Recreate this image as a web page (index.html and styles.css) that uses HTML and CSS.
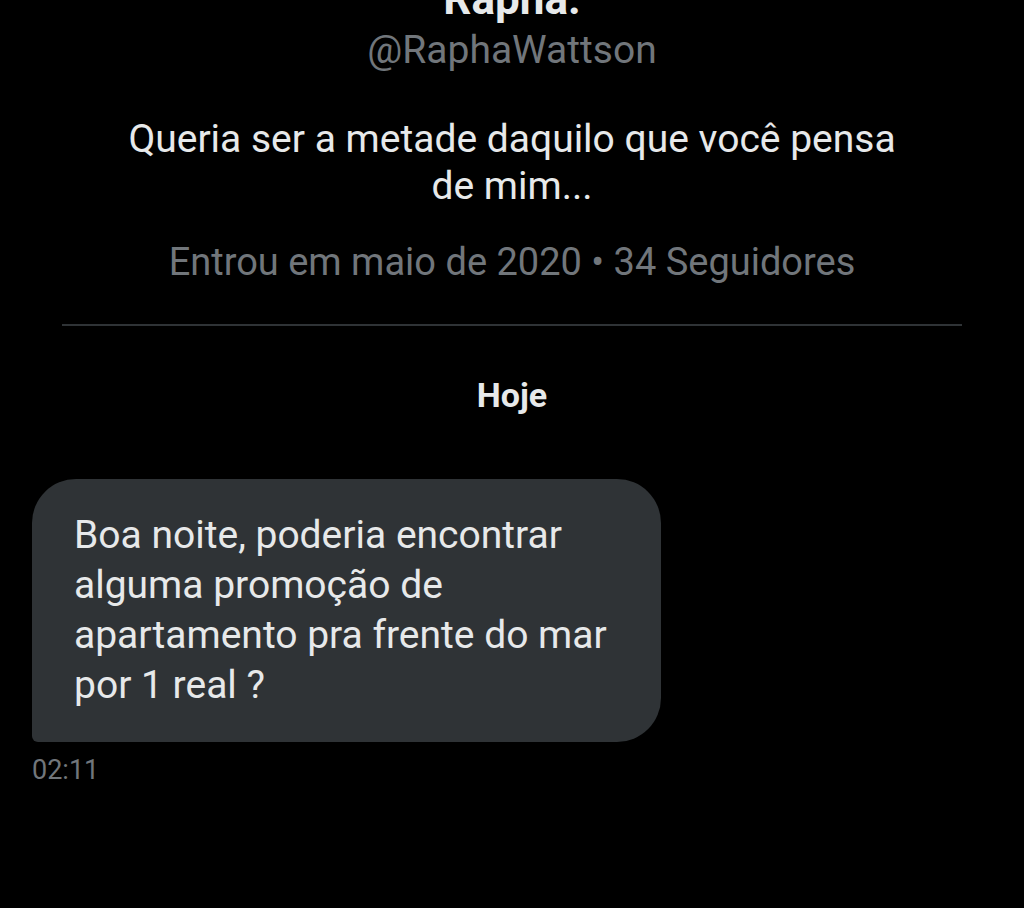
FILE: index.html
```html
<!DOCTYPE html>
<html lang="pt-BR">
  <head>
    <meta charset="UTF-8" />
    <meta name="viewport" content="width=device-width, initial-scale=1.0" />
    <title>Mensagens</title>
    <link rel="stylesheet" href="styles.css">
  </head>

  <body>
    <div class="conversation">
      <!-- Profile Header -->
      <div class="profile">
        <div class="profile-name">Rapha.</div>
        <div class="profile-handle">@RaphaWattson</div>
        <p class="profile-bio">Queria ser a metade daquilo que você pensa<br />de mim...</p>
        <div class="profile-meta">Entrou em maio de 2020 • 34 Seguidores</div>
      </div>

      <hr class="divider" />

      <!-- Day Label -->
      <div class="day-label">Hoje</div>

      <!-- Message -->
      <div class="message">
        <div class="bubble">
          Boa noite, poderia encontrar<br />
          alguma promoção de<br />
          apartamento pra frente do mar<br />
          por 1 real ?
        </div>
        <div class="timestamp">02:11</div>
      </div>
    </div>
  </body>
</html>
```

FILE: styles.css
```css
/* Global Styles */
body {
  margin: 0;
  padding: 0;
  background-color: #000;
  color: #e7e9ea;
  font-family: Roboto, "Noto Sans", sans-serif;
  height: 908px;
  overflow: hidden;
}

.conversation {
  display: flex;
  flex-direction: column;
}

/* Profile Header */
.profile {
  display: flex;
  flex-direction: column;
  align-items: center;
  text-align: center;
  margin-top: -25px;
}

.profile-name {
  font-size: 44px;
  font-weight: 700;
  line-height: 48px;
}

.profile-handle {
  font-size: 39px;
  line-height: 48px;
  color: #71767b;
  margin-top: 3px;
}

.profile-bio {
  font-size: 39px;
  line-height: 47px;
  margin: 42px 0 0;
}

.profile-meta {
  font-size: 38px;
  line-height: 48px;
  color: #71767b;
  margin-top: 28px;
}

.divider {
  border: none;
  border-top: 2px solid #2f3336;
  margin: 38px 62px 0;
}

/* Day Label */
.day-label {
  text-align: center;
  font-size: 34px;
  font-weight: 700;
  line-height: 40px;
  margin-top: 49px;
}

/* Message */
.message {
  display: flex;
  flex-direction: column;
  align-items: flex-start;
  padding: 0 32px;
  margin-top: 64px;
}

.bubble {
  background-color: #2f3336;
  border-radius: 44px 44px 44px 6px;
  padding: 31px 54px 32px 42px;
  font-size: 39px;
  line-height: 50px;
}

.timestamp {
  font-size: 27px;
  line-height: 30px;
  color: #71767b;
  margin-top: 13px;
}
```
